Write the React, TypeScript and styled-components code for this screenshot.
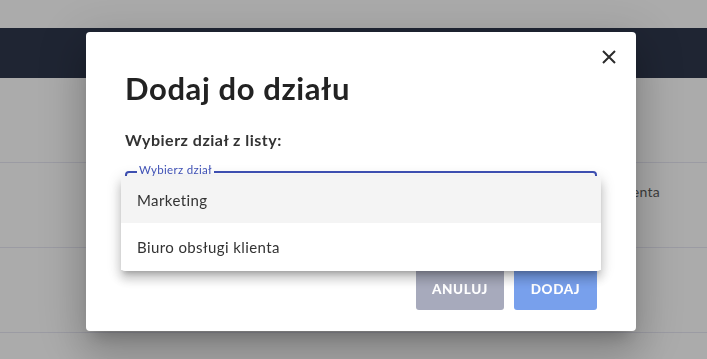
import React from "react";
import styled, { createGlobalStyle } from "styled-components";

const GlobalStyle = createGlobalStyle`
  html, body {
    margin: 0;
    padding: 0;
    background: #ababab;
    font-family: Lato, "Open Sans", sans-serif;
    overflow: hidden;
  }
`;

const Page = styled.div`
  display: flex;
  flex-direction: column;
  height: 359px;
`;

const TopStrip = styled.div`
  height: 28px;
  background: #ababab;
`;

const HeaderBar = styled.div`
  height: 50px;
  background: #1f2533;
`;

const Row = styled.div`
  height: 64px;
  border-bottom: 1px solid #9b9ba3;
  display: flex;
  justify-content: flex-end;
  padding: 20px 47px 0 0;
  font-size: 14px;
  letter-spacing: 0.3px;
  color: #3d3d3d;
`;

const Overlay = styled.div`
  position: fixed;
  inset: 0;
  padding: 32px 0 0 86px;
`;

const Modal = styled.div`
  position: relative;
  width: 550px;
  height: 299px;
  box-sizing: border-box;
  background: #fff;
  border-radius: 4px;
  box-shadow: 0 11px 15px -7px rgba(0, 0, 0, 0.2),
    0 24px 38px 3px rgba(0, 0, 0, 0.14), 0 9px 46px 8px rgba(0, 0, 0, 0.12);
  padding: 38px 39px 0 39px;
`;

const CloseButton = styled.button`
  position: absolute;
  top: 16px;
  right: 18px;
  width: 18px;
  height: 18px;
  padding: 0;
  border: none;
  background: none;
  cursor: pointer;
  svg {
    display: block;
  }
`;

const Title = styled.h2`
  margin: 0;
  font-size: 31px;
  line-height: 36px;
  letter-spacing: 0.6px;
  font-weight: 700;
  color: #222;
`;

const Subtitle = styled.div`
  margin-top: 24px;
  font-size: 16px;
  line-height: 20px;
  letter-spacing: 0.5px;
  font-weight: 700;
  color: #333;
`;

const Field = styled.fieldset`
  position: relative;
  margin: 16px 0 0 0;
  padding: 0 12px;
  height: 54px;
  border: 2px solid #3f51b5;
  border-radius: 4px;
`;

const Legend = styled.legend`
  position: relative;
  z-index: 3;
  top: -2px;
  font-size: 11.5px;
  line-height: 12px;
  letter-spacing: 0.3px;
  color: #3f51b5;
  padding: 0 2px;
  margin-left: -2px;
`;

const Menu = styled.ul`
  position: absolute;
  left: -6px;
  right: -6px;
  top: -2px;
  margin: 0;
  padding: 0 0 1px;
  list-style: none;
  background: #fff;
  border-radius: 4px;
  box-shadow: 0 5px 5px -3px rgba(0, 0, 0, 0.2), 0 8px 10px 1px rgba(0, 0, 0, 0.14),
    0 3px 14px 2px rgba(0, 0, 0, 0.12);
  z-index: 2;
`;

const MenuItem = styled.li<{ $active?: boolean }>`
  height: 47px;
  display: flex;
  align-items: center;
  padding: 0 16px;
  font-size: 15px;
  letter-spacing: 0.4px;
  color: #333;
  background: ${(p) => (p.$active ? "#f4f4f4" : "#fff")};
  &:first-child {
    border-radius: 4px 4px 0 0;
  }
`;

const Actions = styled.div`
  display: flex;
  justify-content: flex-end;
  gap: 10px;
  margin-top: 44px;
`;

const Button = styled.button<{ $primary?: boolean; $w: number }>`
  width: ${(p) => p.$w}px;
  height: 42px;
  border: none;
  border-radius: 3px;
  background: ${(p) => (p.$primary ? "#78a0ec" : "#a7aabc")};
  color: #fff;
  font-family: Lato, sans-serif;
  font-weight: 900;
  font-size: 13.5px;
  letter-spacing: 0.6px;
  text-transform: uppercase;
  cursor: pointer;
`;

export default function App() {
  return (
    <>
      <GlobalStyle />
      <Page>
        <TopStrip />
        <HeaderBar />
        <Row />
        <Row>Biuro obsługi klienta</Row>
        <Row />
      </Page>
      <Overlay>
        <Modal>
          <CloseButton aria-label="Zamknij">
            <svg width="18" height="18" viewBox="0 0 18 18">
              <path d="M3 3L15 15M15 3L3 15" stroke="#2b2b2b" strokeWidth="2" />
            </svg>
          </CloseButton>
          <Title>Dodaj do działu</Title>
          <Subtitle>Wybierz dział z listy:</Subtitle>
          <Field>
            <Legend>Wybierz dział</Legend>
            <Menu>
              <MenuItem $active>Marketing</MenuItem>
              <MenuItem>Biuro obsługi klienta</MenuItem>
            </Menu>
          </Field>
          <Actions>
            <Button $w={88}>Anuluj</Button>
            <Button $w={83} $primary>
              Dodaj
            </Button>
          </Actions>
        </Modal>
      </Overlay>
    </>
  );
}
